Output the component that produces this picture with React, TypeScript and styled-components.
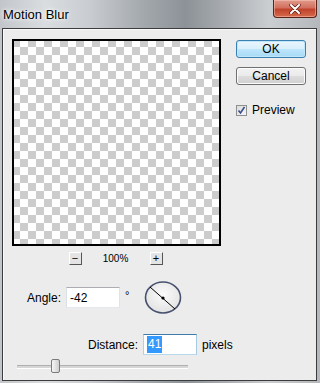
import React from 'react';
import styled, { createGlobalStyle } from 'styled-components';

const GlobalStyle = createGlobalStyle`
  html, body {
    margin: 0;
    padding: 0;
    overflow: hidden;
    font-family: "Liberation Sans", Arial, sans-serif;
  }
`;

const Window = styled.div`
  width: 320px;
  height: 383px;
  box-sizing: border-box;
  display: flex;
  flex-direction: column;
  padding: 0 3px 2px 2px;
  background: linear-gradient(
    90deg,
    #c2c6ca 0%,
    #dadde0 14%,
    #c9ccd0 28%,
    #a3a8ad 45%,
    #8c9297 58%,
    #a8acb0 70%,
    #cbced1 84%,
    #b4b8bc 100%
  );
`;

const TitleBar = styled.div`
  height: 28px;
  display: flex;
  justify-content: space-between;
  align-items: flex-start;
`;

const Title = styled.div`
  padding: 7px 0 0 1px;
  font-size: 13px;
  color: #000;
  text-shadow: 0 0 6px #fff, 0 0 3px #fff;
`;

const CloseButton = styled.div`
  width: 44px;
  height: 18px;
  box-sizing: border-box;
  border: 1px solid #5c2218;
  border-top: none;
  border-radius: 0 0 4px 4px;
  background: linear-gradient(180deg, #e19a8c 0%, #d2705e 45%, #c0432c 55%, #d56a4c 100%);
  box-shadow: inset 0 0 0 1px rgba(255, 210, 200, 0.45);
  display: flex;
  align-items: center;
  justify-content: center;
`;

const Body = styled.div`
  flex: 1;
  box-sizing: border-box;
  border: 1px solid #3c3c3c;
  background: #ececec;
  box-shadow: inset 1px 1px 0 #fafafa;
  padding: 10px 0 0 9px;
  display: flex;
  flex-direction: column;
`;

const TopSection = styled.div`
  display: flex;
  gap: 15px;
`;

const PreviewColumn = styled.div`
  display: flex;
  flex-direction: column;
  align-items: center;
`;

const Canvas = styled.div`
  width: 209px;
  height: 207px;
  box-sizing: border-box;
  border: 2px solid #000;
  background-color: #fff;
  background-image: conic-gradient(#fff 0 25%, #cccccc 0 50%, #fff 0 75%, #cccccc 0);
  background-size: 16px 16px;
  background-origin: border-box;
`;

const ZoomRow = styled.div`
  margin-top: 6px;
  display: flex;
  align-items: center;
  gap: 21px;
  margin-left: -2px;
`;

const ZoomButton = styled.div`
  width: 13px;
  height: 13px;
  box-sizing: border-box;
  border: 1px solid;
  border-color: #fff #555 #555 #fff;
  background: #e4e4e4;
  font-size: 11px;
  line-height: 11px;
  text-align: center;
  color: #000;
`;

const ZoomLabel = styled.span`
  font-size: 10px;
  color: #000;
  width: 26px;
  text-align: center;
`;

const ButtonColumn = styled.div`
  display: flex;
  flex-direction: column;
  padding-top: 1px;
`;

const DialogButton = styled.div<{ $primary?: boolean }>`
  width: 70px;
  height: 18px;
  box-sizing: border-box;
  margin-bottom: 9px;
  border: 1px solid ${p => (p.$primary ? '#3c7fb1' : '#707070')};
  border-radius: 3px;
  background: ${p =>
    p.$primary
      ? 'linear-gradient(180deg, #eaf6fd 0%, #d9f0fc 48%, #bee6fd 52%, #a7d9f5 100%)'
      : 'linear-gradient(180deg, #f2f2f2 0%, #ebebeb 48%, #dddddd 52%, #cfcfcf 100%)'};
  box-shadow: inset 0 0 0 1px ${p => (p.$primary ? '#bfe6fb' : '#fcfcfc')};
  font-size: 12px;
  line-height: 16px;
  text-align: center;
  color: #000;
`;

const CheckRow = styled.div`
  margin-top: 9px;
  display: flex;
  align-items: center;
  gap: 5px;
  font-size: 12px;
  color: #000;
`;

const CheckBox = styled.div`
  width: 11px;
  height: 11px;
  box-sizing: border-box;
  border: 1px solid #8e8f8f;
  background: linear-gradient(135deg, #dcdcdc 0%, #f6f6f6 100%);
  display: flex;
  align-items: center;
  justify-content: center;
`;

const FieldRow = styled.div<{ $indent: number; $top: number }>`
  display: flex;
  align-items: center;
  margin-left: ${p => p.$indent}px;
  margin-top: ${p => p.$top}px;
  font-size: 12px;
  color: #000;
`;

const Label = styled.span`
  margin-right: 5px;
`;

const TextBox = styled.div<{ $focused?: boolean }>`
  width: 54px;
  height: 21px;
  box-sizing: border-box;
  border: 1px solid;
  border-color: ${p => (p.$focused ? '#3d7bad #a4c9e3 #b7d9ed #b5cfe7' : '#abadb3 #e2e3ea #e3e9ef #dbdfe6')};
  background: #fff;
  padding: 0 3px;
  display: flex;
  align-items: center;
  font-size: 12px;
  color: #000;
`;

const Selection = styled.span`
  background: #3399ff;
  color: #fff;
  padding: 1px 1px;
  line-height: 15px;
`;

const Degree = styled.span`
  margin: 0 15px 6px 5px;
  font-size: 11px;
`;

const Unit = styled.span`
  margin-left: 5px;
`;

const SliderRow = styled.div`
  margin: 4px 0 0 5px;
  width: 171px;
  height: 14px;
  position: relative;
`;

const Track = styled.div`
  position: absolute;
  left: 0;
  right: 0;
  top: 6px;
  height: 2px;
  background: #d6d6d6;
  border-top: 1px solid #b0b0b0;
  border-bottom: 1px solid #fff;
`;

const Thumb = styled.div`
  position: absolute;
  top: 0;
  width: 9px;
  height: 14px;
  box-sizing: border-box;
  border: 1px solid #7a7a7a;
  border-radius: 2px;
  background: linear-gradient(90deg, #f6f6f6 0%, #e2e2e2 50%, #cfcfcf 100%);
`;

const Dial = () => (
  <svg width="38" height="33" viewBox="0 0 38 33">
    <defs>
      <radialGradient id="dialFill" cx="50%" cy="40%" r="60%">
        <stop offset="0%" stopColor="#fbfbfb" />
        <stop offset="100%" stopColor="#e2e2e2" />
      </radialGradient>
    </defs>
    <ellipse cx="19" cy="16.5" rx="17.5" ry="15.5" fill="url(#dialFill)" stroke="#47506e" strokeWidth="1.6" />
    <line x1="6" y1="6" x2="31" y2="28" stroke="#000" strokeWidth="1" />
    <circle cx="19" cy="17" r="1.6" fill="#000" />
  </svg>
);

const App: React.FC = () => {
  const distance = 41;
  const thumbPos = 34;

  return (
    <>
      <GlobalStyle />
      <Window>
        <TitleBar>
          <Title>Motion Blur</Title>
          <CloseButton>
            <svg width="12" height="10" viewBox="0 0 12 10">
              <path d="M2 1 L10 9 M10 1 L2 9" stroke="#5a1a10" strokeWidth="3.4" strokeLinecap="round" />
              <path d="M2 1 L10 9 M10 1 L2 9" stroke="#fff" strokeWidth="2" strokeLinecap="round" />
            </svg>
          </CloseButton>
        </TitleBar>
        <Body>
          <TopSection>
            <PreviewColumn>
              <Canvas />
              <ZoomRow>
                <ZoomButton>−</ZoomButton>
                <ZoomLabel>100%</ZoomLabel>
                <ZoomButton>+</ZoomButton>
              </ZoomRow>
            </PreviewColumn>
            <ButtonColumn>
              <DialogButton $primary>OK</DialogButton>
              <DialogButton>Cancel</DialogButton>
              <CheckRow>
                <CheckBox>
                  <svg width="9" height="9" viewBox="0 0 9 9">
                    <path d="M1.5 4.5 L3.5 7 L7.5 1" fill="none" stroke="#3b4f8f" strokeWidth="1.6" />
                  </svg>
                </CheckBox>
                Preview
              </CheckRow>
            </ButtonColumn>
          </TopSection>

          <FieldRow $indent={15} $top={16}>
            <Label>Angle:</Label>
            <TextBox>-42</TextBox>
            <Degree>°</Degree>
            <Dial />
          </FieldRow>

          <FieldRow $indent={76} $top={20}>
            <Label>Distance:</Label>
            <TextBox $focused>
              <Selection>{distance}</Selection>
            </TextBox>
            <Unit>pixels</Unit>
          </FieldRow>

          <SliderRow>
            <Track />
            <Thumb style={{ left: thumbPos }} />
          </SliderRow>
        </Body>
      </Window>
    </>
  );
};

export default App;
